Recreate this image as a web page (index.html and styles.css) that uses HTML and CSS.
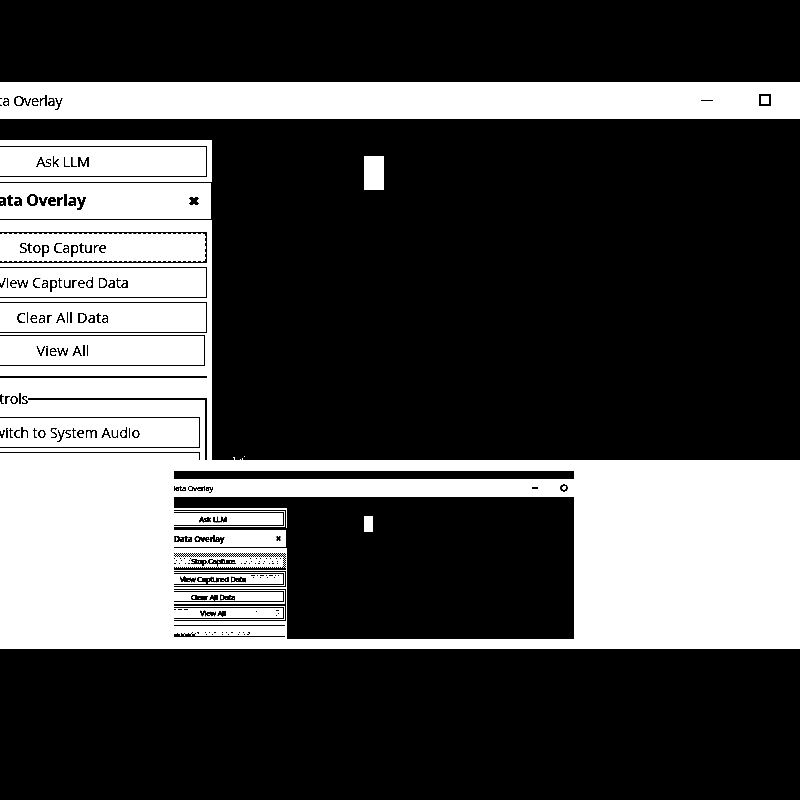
FILE: index.html
```html
<!DOCTYPE html>
<html lang="en"><head><meta charset="utf-8"><title>Data Overlay</title><link rel="stylesheet" href="styles.css"></head>
<body>
<section class="window">
  <header class="titlebar"><span class="name">Data Overlay</span>
    <svg class="min" width="12" height="1"><rect width="12" height="1"/></svg>
    <svg class="max" width="12" height="12"><path d="M1 1h10v10H1z" fill="none" stroke="#000" stroke-width="2"/></svg>
  </header>
  <div class="content">
    <aside class="panel">
      <div class="button ask">Ask LLM</div>
      <div class="heading"><b>Data Overlay</b><svg width="10" height="10"><path d="M1.2 1.2l7.6 7.6M8.8 1.2L1.2 8.8" stroke="#000" stroke-width="3"/></svg></div>
      <div class="button dashed">Stop Capture</div>
      <div class="button">View Captured Data</div>
      <div class="button wide">Clear All Data</div>
      <div class="button all wide">View All</div>
      <div class="rule"></div>
      <div class="group"><span class="legend">Controls</span>
        <div class="button">Switch to System Audio</div>
        <div class="button"></div>
      </div>
    </aside>
    <div class="cursor"></div>
    <svg class="flecks" width="14" height="4"><path d="M0 1h2v1h-2zM1 2h1v2h-1zM7 3h1v1h-1zM9 2h1v2h-1zM11 0h1v1h-1z" fill="#fff"/></svg>
  </div>
</section>
<section class="tray">
  <div class="thumb">
    <header class="titlebar"><span class="name">Data Overlay</span>
      <svg class="min" width="6" height="2"><rect width="6" height="2"/></svg>
      <svg class="max" width="8" height="8"><circle cx="4" cy="4" r="3" fill="none" stroke="#000" stroke-width="1.7"/></svg>
    </header>
    <div class="content">
      <aside class="panel">
        <div class="button ask"><span>Ask LLM</span></div>
        <div class="heading"><b>Data Overlay</b><svg width="5" height="5"><path d="M.5.5l4 4M4.5.5l-4 4" stroke="#000" stroke-width="1.5"/></svg></div>
        <div class="button dotted"><span>Stop Capture</span>
          <svg class="noise" width="112" height="13" shape-rendering="crispEdges" fill="none" stroke="#000"><path d="M0 5.5h18M76 5.5h32" stroke-dasharray="1 5 1 3"/><path d="M2 7.5h16M72 8.5h34" stroke-dasharray="1 4 1 7"/><path d="M0 10.5h108" stroke-dasharray="2 3 1 5 1 2"/></svg>
        </div>
        <div class="button"><span>View Captured Data</span>
          <svg class="noise" width="112" height="12" shape-rendering="crispEdges" fill="none" stroke="#000"><path d="M80 1.5h28" stroke-dasharray="4 2 1 2"/><path d="M82 3.5h26M2 2.5h6" stroke-dasharray="1 6"/></svg>
        </div>
        <div class="button clear"><span>Clear All Data</span></div>
        <div class="button all"><span>View All</span>
          <svg class="noise" width="112" height="12" shape-rendering="crispEdges" fill="none" stroke="#000"><path d="M1 1.5h16" stroke-dasharray="4 2"/><path d="M85 3.5h1M105 2.5h3M107 5.5h1M105 7.5h1"/></svg>
        </div>
        <div class="rule"></div>
        <svg class="specks" width="111" height="11" shape-rendering="crispEdges" fill="none" stroke="#000"><path d="M0 10.5h111"/><path d="M0 9h22" stroke-width="2" stroke-dasharray="6 1 3 1"/><path d="M3 7.5h23" stroke-dasharray="1 3 1 2"/><path d="M18 6.5h61" stroke-dasharray="1 4 2 6 1 3"/><path d="M32 8.5h40" stroke-dasharray="1 5 1 9"/><path d="M73 8.5h2M75 7.5h1"/></svg>
      </aside>
      <div class="cursor"></div>
    </div>
  </div>
</section>
</body></html>
```
FILE: styles.css
```css
* { box-sizing: border-box; }
html { background: #000; }
body { margin: 0; width: 800px; height: 800px; overflow: hidden; background: #000; color: #000; font: 14.5px/20px "Open Sans", "Noto Sans", sans-serif; letter-spacing: -0.15px; white-space: nowrap; -webkit-text-stroke: .22px #000; filter: grayscale(1) contrast(12); }
svg { display: block; flex: none; }
.window { height: 378px; margin-top: 82px; overflow: hidden; }
.titlebar { height: 37px; background: #fff; display: flex; align-items: center; }
.titlebar .name { width: 62px; display: flex; justify-content: flex-end; letter-spacing: -.4px; }
.titlebar .min { margin-left: auto; }
.titlebar .max { margin: 0 29px 1px 46px; }
.content { display: flex; align-items: flex-start; position: relative; }
.panel { width: 298px; height: 330px; margin: 21px 0 0 -86px; padding: 6px 5px 0; background: #fff; flex: none; }
.button { height: 31px; margin-bottom: 4px; border: 1px solid #000; display: flex; align-items: center; justify-content: center; position: relative; }
.wide { letter-spacing: .15px; }
.ask { margin-bottom: 5px; letter-spacing: -.3px; }
.heading { height: 38px; margin: 0 -4px 12px -5px; border: solid #000; border-width: 1px 1px 1px 0; width: 298px; display: flex; align-items: center; justify-content: space-between; padding: 0 12px 0 72px; font-size: 16px; letter-spacing: -.4px; -webkit-text-stroke: .2px #000; }
.heading b { margin-bottom: 2px; }
.button.dashed { outline: 1px dashed #000; outline-offset: -2px; }
.button.all { margin: -2px 2px 10px; }
.rule { height: 2px; background: #000; }
.group { margin-top: 20px; height: 90px; border: 2px solid #000; padding: 17px 5px 0; position: relative; }
.legend { position: absolute; top: -11px; right: 177px; padding-left: 4px; background: #fff; letter-spacing: -.35px; }
.window .cursor { width: 20px; height: 34px; margin: 37px 0 0 152px; background: #fff; }
.flecks { position: absolute; left: 233px; top: 337px; }
.tray { height: 189px; background: #fff; padding: 11px 0 0 174px; }
.thumb { width: 400px; height: 168px; padding-top: 8px; overflow: hidden; background: #000; font-size: 7.5px; line-height: 10px; letter-spacing: -.2px; -webkit-text-stroke: .85px #000; }
.thumb .titlebar { height: 18px; -webkit-text-stroke: .4px #000; }
.thumb .titlebar .name { width: 39px; letter-spacing: -.2px; }
.thumb .titlebar .max { margin: 0 6px 0 22px; }
.thumb .panel { width: 156px; height: 131px; margin: 11px 0 0 -43px; padding: 2px 1px 0 0; }
.thumb .button { height: 16px; margin: 0 0 2px; border: 3px double #000; padding-left: 9px; letter-spacing: -.18px; }
.thumb .ask { height: 18px; margin: 0; }
.thumb .heading { height: 20px; width: 156px; margin: 0 0 5px; padding: 0 5px 0 43px; font-size: 8.2px; letter-spacing: -.28px; border-top-width: 2px; -webkit-text-stroke: .35px #000; }
.thumb .heading b { margin: 0; }
.thumb .dotted { height: 17px; border: 0 solid #000; border-bottom-width: 2px; margin-bottom: 1px; background: conic-gradient(#000 25%, #fff 0 50%, #000 0 75%, #fff 0) 0 0 / 2px 2px; }
.thumb .dotted::before { content: ""; position: absolute; inset: 4px 3px 1px 0; background: #fff; }
.thumb .dotted span { position: relative; }
.thumb .noise { position: absolute; right: 0; top: 0; }
.thumb .button.clear { margin-bottom: 0; border-bottom-width: 4px; }
.thumb .button.all { margin: 0 0 4px; }
.thumb .rule { height: 1px; margin-right: 1px; }
.thumb .specks { margin-left: 43px; }
.thumb .cursor { width: 9px; height: 16px; margin: 19px 0 0 77px; background: #fff; }
```
